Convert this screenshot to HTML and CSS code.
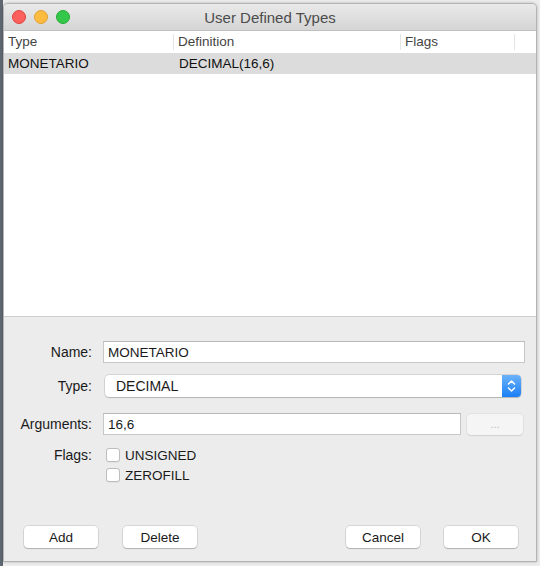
FILE: index.html
```html
<!DOCTYPE html>
<html lang="en">
<head>
    <meta charset="UTF-8">
    <meta name="viewport" content="width=device-width, initial-scale=1.0">
    <title>User Defined Types</title>
    <link rel="stylesheet" href="styles.css">
</head>
<body>

<div class="window">
    <div class="titlebar">
        <div class="lights">
            <span class="light close"></span>
            <span class="light min"></span>
            <span class="light max"></span>
        </div>
        <div class="title">User Defined Types</div>
    </div>

    <div class="table">
        <div class="thead">
            <div class="col c-type">Type</div>
            <div class="col c-def">Definition</div>
            <div class="col c-flags">Flags</div>
            <div class="col c-rest"></div>
        </div>
        <div class="row selected">
            <div class="col c-type">MONETARIO</div>
            <div class="col c-def">DECIMAL(16,6)</div>
            <div class="col c-flags"></div>
        </div>
    </div>

    <div class="form">
        <div class="field">
            <label>Name:</label>
            <input type="text" class="text name-input" value="MONETARIO">
        </div>
        <div class="field type-field">
            <label>Type:</label>
            <div class="popup">
                <span>DECIMAL</span>
                <span class="stepper">
                    <svg width="9" height="14" viewBox="0 0 9 14">
                        <path d="M1.5 5 L4.5 2 L7.5 5" fill="none" stroke="#fff" stroke-width="1.5" stroke-linecap="round" stroke-linejoin="round"/>
                        <path d="M1.5 9 L4.5 12 L7.5 9" fill="none" stroke="#fff" stroke-width="1.5" stroke-linecap="round" stroke-linejoin="round"/>
                    </svg>
                </span>
            </div>
        </div>
        <div class="field args-field">
            <label>Arguments:</label>
            <input type="text" class="text args-input" value="16,6">
            <button class="btn dots" disabled>...</button>
        </div>
        <div class="field flags-field">
            <label>Flags:</label>
            <div class="checks">
                <div class="check"><span class="box"></span>UNSIGNED</div>
                <div class="check"><span class="box"></span>ZEROFILL</div>
            </div>
        </div>

        <div class="buttons">
            <button class="btn push">Add</button>
            <button class="btn push delete">Delete</button>
            <div class="spacer"></div>
            <button class="btn push">Cancel</button>
            <button class="btn push ok">OK</button>
        </div>
    </div>
</div>

</body>
</html>
```

FILE: styles.css
```css
body {
    margin: 0;
    height: 566px;
    font-family: "Liberation Sans", Arial, sans-serif;
    background: linear-gradient(to right, #5f6770 0, #5f6770 3px, #ededed 3px);
    overflow: hidden;
}
.window {
    margin: 3px 3px 0 3px;
    width: 532px;
    height: 557px;
    border: 1px solid #b3b3b3;
    border-radius: 5px 5px 0 0;
    background-color: #ececec;
    display: flex;
    flex-direction: column;
    box-shadow: 0 0 3px rgba(0, 0, 0, 0.25);
}
.titlebar {
    height: 26px;
    background: linear-gradient(#e9e9e9, #d5d5d5);
    border-bottom: 1px solid #c1c1c1;
    border-radius: 4px 4px 0 0;
    display: flex;
    align-items: center;
    position: relative;
}
.lights {
    display: flex;
    gap: 8px;
    padding-left: 8px;
}
.light {
    width: 12px;
    height: 12px;
    border-radius: 50%;
}
.light.close { background-color: #fc605c; border: 0.5px solid #e0443e; }
.light.min { background-color: #fdbc40; border: 0.5px solid #dea236; }
.light.max { background-color: #34c84a; border: 0.5px solid #27aa35; }
.title {
    position: absolute;
    left: 0;
    right: 0;
    text-align: center;
    font-size: 15px;
    color: #4c4c4c;
}
.table {
    height: 285px;
    background-color: white;
    border-bottom: 1px solid #cfcfcf;
}
.thead, .row {
    display: flex;
}
.thead {
    height: 22px;
    align-items: center;
    font-size: 13.5px;
    color: #444;
}
.thead .col {
    height: 16px;
    line-height: 16px;
    border-right: 1px solid #e3e3e3;
}
.thead .c-rest {
    border-right: none;
}
.row {
    height: 21px;
    line-height: 21px;
    font-size: 13.5px;
    color: #111;
}
.row.selected {
    background-color: #dcdcdc;
}
.col {
    padding-left: 4px;
    box-sizing: border-box;
    white-space: nowrap;
}
.c-type { width: 170px; }
.c-def { width: 227px; padding-left: 4px; }
.c-flags { width: 114px; }
.c-rest { flex: 1; }
.row .c-def { padding-left: 5px; }
.form {
    flex: 1;
    display: flex;
    flex-direction: column;
    padding-top: 24px;
    font-size: 13.5px;
    color: #1a1a1a;
}
.field {
    display: flex;
    align-items: center;
    height: 22px;
}
.field label {
    width: 88px;
    text-align: right;
    margin-right: 11px;
    font-size: 14px;
}
.text {
    height: 22px;
    box-sizing: border-box;
    border: 1px solid #c6c6c6;
    border-top-color: #b9b9b9;
    background-color: white;
    padding: 0 4px;
    font-family: inherit;
    font-size: 13.5px;
    color: #1a1a1a;
    outline: none;
}
.name-input { width: 422px; }
.type-field { margin-top: 12px; }
.popup {
    margin-left: 2px;
    width: 416px;
    height: 22px;
    box-sizing: border-box;
    background-color: white;
    border-radius: 4px;
    box-shadow: 0 0 0 0.5px rgba(0, 0, 0, 0.2), 0 1px 1px rgba(0, 0, 0, 0.15);
    display: flex;
    align-items: center;
    justify-content: space-between;
    padding-left: 11px;
    font-size: 14px;
}
.stepper {
    width: 19px;
    height: 22px;
    border-radius: 0 4px 4px 0;
    background: linear-gradient(#6cb2fb, #1b7ff6);
    display: flex;
    align-items: center;
    justify-content: center;
}
.args-field { margin-top: 16px; }
.args-input { width: 358px; }
.btn {
    font-family: inherit;
    font-size: 13.5px;
    color: #1a1a1a;
    background-color: white;
    border: none;
    border-radius: 4px;
    box-shadow: 0 0 0 0.5px rgba(0, 0, 0, 0.18), 0 1px 1px rgba(0, 0, 0, 0.18);
    height: 21px;
    padding: 0;
    cursor: pointer;
}
.dots {
    margin-left: 6px;
    width: 56px;
    background-color: #f5f5f5;
    color: #b8b8b8;
    font-size: 11px;
    box-shadow: 0 0 0 0.5px rgba(0, 0, 0, 0.08), 0 1px 1px rgba(0, 0, 0, 0.08);
}
.flags-field {
    margin-top: 11px;
    align-items: flex-start;
    height: auto;
}
.flags-field label {
    line-height: 18px;
}
.checks {
    display: flex;
    flex-direction: column;
    gap: 2px;
    margin-left: 3px;
}
.check {
    display: flex;
    align-items: center;
    height: 18px;
    font-size: 13.5px;
}
.box {
    width: 14px;
    height: 14px;
    box-sizing: border-box;
    border: 1px solid #bdbdbd;
    border-radius: 3px;
    background-color: white;
    margin-right: 5px;
    box-shadow: 0 0.5px 0.5px rgba(0, 0, 0, 0.08);
}
.buttons {
    display: flex;
    margin-top: 42px;
    padding: 0 18px 0 20px;
}
.push {
    width: 74px;
    height: 22px;
}
.delete { margin-left: 25px; }
.spacer { flex: 1; }
.ok { margin-left: 24px; }
```
